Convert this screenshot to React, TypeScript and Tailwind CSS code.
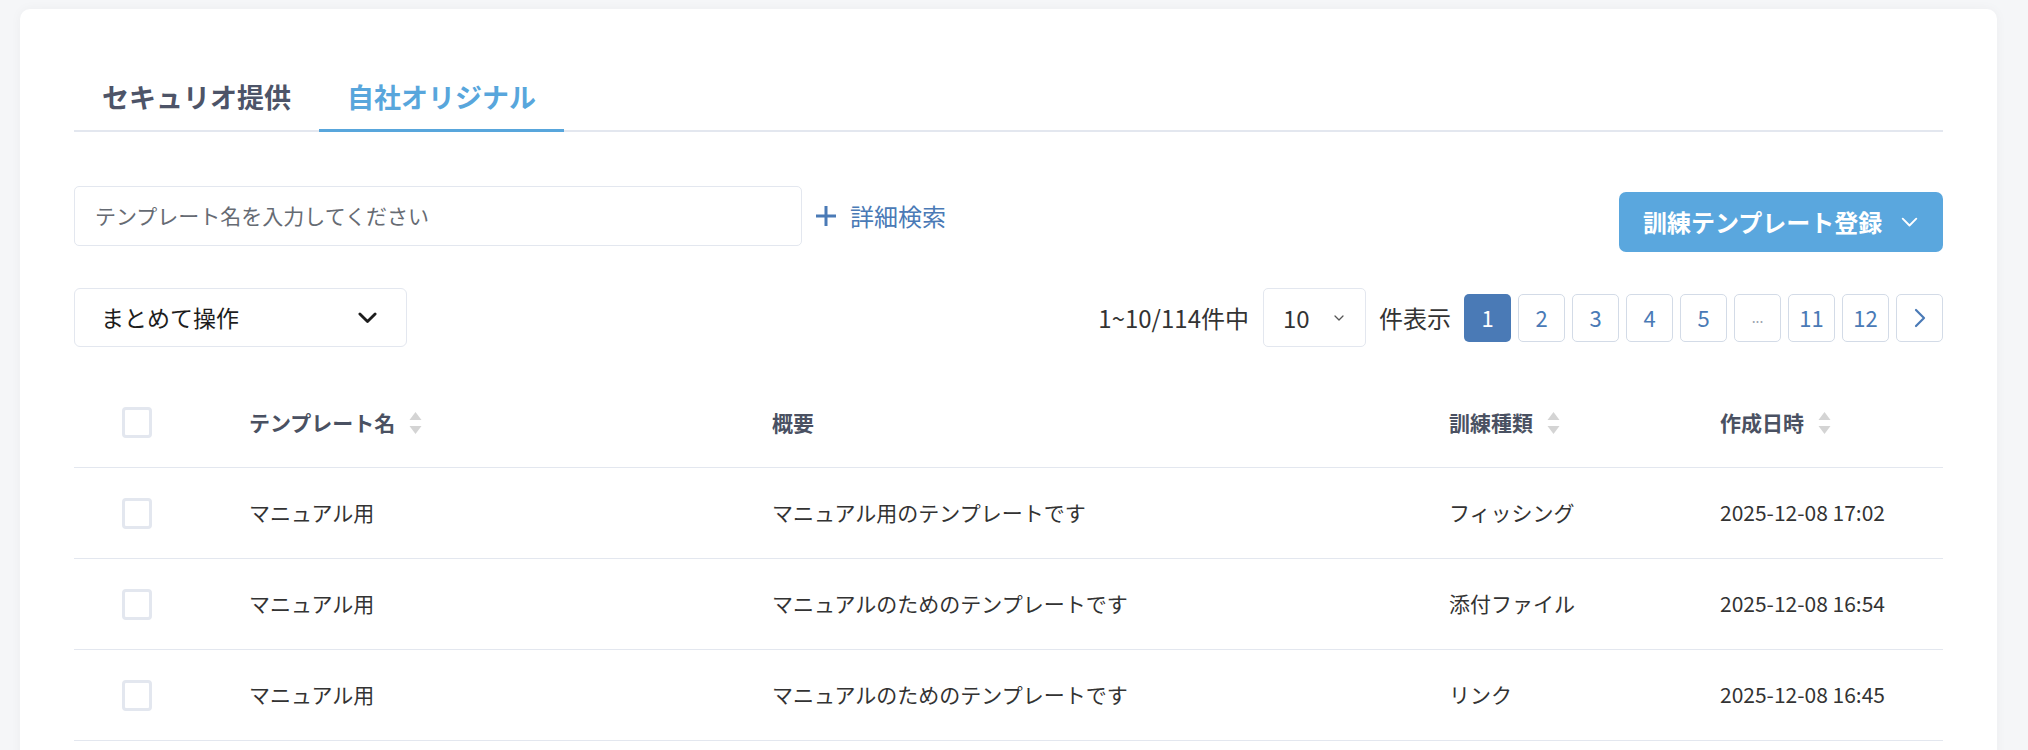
import React from "react";

const F = { fontFamily: '"Noto Sans CJK JP", "Noto Sans", sans-serif' };

function Checkbox() {
  return <div className="w-[30px] h-[31px] rounded-[4px] border-[3px] border-[#e3e7ef] bg-white" />;
}

function SortIcon() {
  return (
    <svg width="13" height="24" viewBox="0 0 13 24" className="ml-[14px]">
      <path d="M6.5 1 L12.5 9 L0.5 9 Z" fill="#d4d4d4" />
      <path d="M6.5 23 L12.5 15 L0.5 15 Z" fill="#d4d4d4" />
    </svg>
  );
}

function Chevron({ w, color, sw }: { w: number; color: string; sw: number }) {
  return (
    <svg width={w} height={w * 0.6} viewBox="0 0 20 12" fill="none">
      <path d="M2 2 L10 10 L18 2" stroke={color} strokeWidth={sw} strokeLinecap="round" strokeLinejoin="round" />
    </svg>
  );
}

const rows = [
  ["マニュアル用", "マニュアル用のテンプレートです", "フィッシング", "2025-12-08 17:02"],
  ["マニュアル用", "マニュアルのためのテンプレートです", "添付ファイル", "2025-12-08 16:54"],
  ["マニュアル用", "マニュアルのためのテンプレートです", "リンク", "2025-12-08 16:45"],
];

export default function App() {
  const pages = ["2", "3", "4", "5", "...", "11", "12"];
  return (
    <div className="w-[2028px] h-[750px] overflow-hidden bg-[#f5f6f8] pl-[20px] pr-[31px] pt-[9px]" style={F}>
      <div className="bg-white rounded-[10px] shadow-[0_0_12px_rgba(0,0,0,0.04)] px-[54px] pt-[70px] h-[800px]">
        {/* Tabs */}
        <div className="flex border-b-2 border-[#e3e7ef]">
          <div className="px-[28px] pb-[14px] text-[27px] leading-[36px] font-bold text-[#4d5468] -mb-[2px] border-b-[3px] border-transparent whitespace-nowrap">
            セキュリオ提供
          </div>
          <div className="px-[28px] pb-[14px] text-[27px] leading-[36px] font-bold text-[#58a6dc] -mb-[2px] border-b-[3px] border-[#58a6dc] whitespace-nowrap">
            自社オリジナル
          </div>
        </div>

        {/* Search row */}
        <div className="mt-[54px] flex items-start justify-between">
          <div className="flex items-center">
            <div className="w-[728px] h-[60px] border border-[#e3e7ef] rounded-[5px] flex items-center pl-[20px] text-[21px] text-[#666b73] whitespace-nowrap">
              テンプレート名を入力してください
            </div>
            <div className="ml-[12px] flex items-center text-[#4a7ab6]">
              <svg width="24" height="24" viewBox="0 0 24 24">
                <path d="M12 2 V22 M2 12 H22" stroke="#4a7ab6" strokeWidth="3" />
              </svg>
              <span className="ml-[12px] text-[24px] whitespace-nowrap">詳細検索</span>
            </div>
          </div>
          <div className="mt-[6px] w-[324px] h-[60px] rounded-[7px] bg-[#5aa7de] flex items-center justify-between pl-[24px] pr-[25px] text-white font-bold text-[24px]">
            <span className="whitespace-nowrap">訓練テンプレート登録</span>
            <Chevron w={17} color="#ffffff" sw={2.2} />
          </div>
        </div>

        {/* Action row */}
        <div className="mt-[36px] flex items-center justify-between">
          <div className="w-[333px] h-[59px] border border-[#e3e7ef] rounded-[6px] flex items-center justify-between pl-[26px] pr-[29px] text-[23px] text-[#1d1d1d]">
            <span className="whitespace-nowrap">まとめて操作</span>
            <Chevron w={19} color="#1d1d1d" sw={3} />
          </div>
          <div className="flex items-center text-[24px] text-[#333] whitespace-nowrap">
            <span>1~10/114件中</span>
            <div className="ml-[14px] w-[103px] h-[59px] border border-[#e3e7ef] rounded-[5px] flex items-center pl-[19px] text-[24px]">
              <span>10</span>
              <span className="ml-[24px]"><Chevron w={10} color="#555" sw={2.5} /></span>
            </div>
            <span className="ml-[13px]">件表示</span>
            <div className="ml-[13px] flex gap-[7px]">
              <div className="w-[47px] h-[48px] rounded-[5px] bg-[#4a7ab6] text-white flex items-center justify-center text-[22px]">1</div>
              {pages.map((p) => (
                <div
                  key={p}
                  className={
                    "w-[47px] h-[48px] rounded-[5px] border border-[#d3dbe7] flex items-center justify-center " +
                    (p === "..." ? "text-[14px] text-[#9aa3b0]" : "text-[22px] text-[#4a7ab6]")
                  }
                >
                  {p}
                </div>
              ))}
              <div className="w-[47px] h-[48px] rounded-[5px] border border-[#d3dbe7] flex items-center justify-center">
                <svg width="12" height="20" viewBox="0 0 12 20" fill="none">
                  <path d="M2 2 L10 10 L2 18" stroke="#4a7ab6" strokeWidth="2.2" strokeLinecap="round" strokeLinejoin="round" />
                </svg>
              </div>
            </div>
          </div>
        </div>

        {/* Table */}
        <div className="mt-[31px]">
          <div className="grid grid-cols-[175px_523px_677px_271px_1fr] h-[90px] items-center border-b border-[#e3e7ef] text-[21px] font-bold text-[#4a5162] whitespace-nowrap">
            <div className="pl-[48px]"><Checkbox /></div>
            <div className="flex items-center">テンプレート名<SortIcon /></div>
            <div>概要</div>
            <div className="flex items-center">訓練種類<SortIcon /></div>
            <div className="flex items-center">作成日時<SortIcon /></div>
          </div>
          {rows.map((r, i) => (
            <div key={i} className="grid grid-cols-[175px_523px_677px_271px_1fr] h-[91px] items-center border-b border-[#e3e7ef] text-[21px] text-[#333] whitespace-nowrap">
              <div className="pl-[48px]"><Checkbox /></div>
              <div>{r[0]}</div>
              <div>{r[1]}</div>
              <div>{r[2]}</div>
              <div>{r[3]}</div>
            </div>
          ))}
        </div>
      </div>
    </div>
  );
}
